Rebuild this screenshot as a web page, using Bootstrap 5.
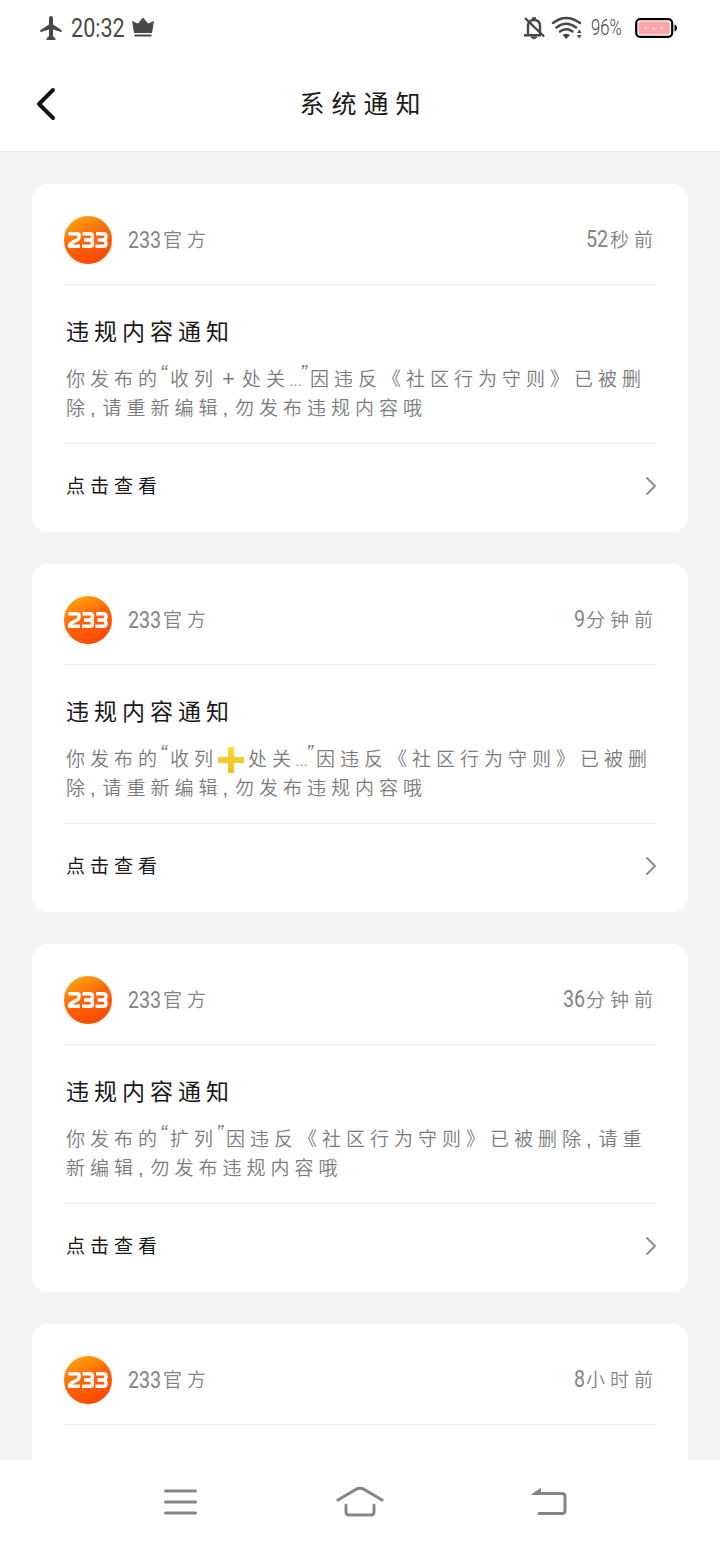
<!DOCTYPE html>
<html lang="zh-CN">
<head>
<meta charset="utf-8">
<meta name="viewport" content="width=device-width, initial-scale=1">
<title>系统通知</title>
<link rel="stylesheet" href="https://cdn.jsdelivr.net/npm/bootstrap@5.3.0/dist/css/bootstrap.min.css">
<style>
body{font-family:"Noto Sans CJK SC",sans-serif;font-weight:350;height:1544px;background:#f4f4f4;color:#191919;overflow:hidden}
.status{height:56px;color:#484848;padding:0 42px 0 39px}
.dg{display:inline-block;font-family:Roboto,sans-serif;font-weight:400;letter-spacing:0;transform-origin:0 50%;white-space:nowrap;line-height:1}
.clock{font-size:26px;width:55px;transform:scaleX(.83)}
.pct{font-size:22.5px;width:32px;font-weight:300;transform:scaleX(.74);position:relative;top:-1px}
.topbar{height:96px;border-bottom:1px solid #e4e4e4;padding-left:36px}
.topbar h1{font-size:25px;letter-spacing:7px;font-weight:400;line-height:32px;left:299.5px;top:30px;white-space:nowrap}
.feed{padding:32px 32px 0;gap:32px;height:1308px;overflow:hidden}
.note{height:348px;border-radius:16px;padding:0 32px;flex:none}
.who{height:101px;border-bottom:1px solid #ebebeb;color:#848484;font-size:19px;padding-top:11px}
.cj{letter-spacing:5px;white-space:nowrap}
.who .dg{font-size:24px;transform:scaleX(.82)}
.n233{width:35px}
.when{margin-right:-2px}
.msg{height:159px;border-bottom:1px solid #ebebeb;padding:28px 0 0 2px}
.msg h2{font-size:23px;letter-spacing:5px;font-weight:400;line-height:34px;margin:0 0 15.5px}
.msg p{font-size:19px;letter-spacing:5px;line-height:29.5px;color:#7c7c7c;white-space:nowrap;margin:0}
.pq,.pe,.pc,.pp{display:inline-block;letter-spacing:0;line-height:1;font-family:"Liberation Sans",sans-serif}
.pq{width:8px;font-size:21px;font-style:italic;text-indent:-2px;height:15px;line-height:15px;vertical-align:7px}
.pe{width:12px;font-size:13px;text-indent:-1px}
.pc{width:12.5px;font-size:20px}
.pp{width:24px;text-align:center;font-size:22px;text-indent:-3px}
.plus{width:28px;height:28px;margin:-4px 3px -4px -1px;vertical-align:-4px}
.more{height:88px;font-size:19px;padding-left:2px;font-weight:400}
.more span{margin-top:-6px}
.more svg{margin-top:-4px;margin-right:-1px}
.keys{height:84px;background:#fff;padding:0 152px 0 163px}
.home-key{margin:-2px 4px 0 -4px}
</style>
<script src="https://cdn.jsdelivr.net/npm/bootstrap@5.3.0/dist/js/bootstrap.bundle.min.js"></script>
</head>
<body>
<svg width="0" height="0" class="position-absolute">
<defs>
<linearGradient id="sun" x1=".15" y1="0" x2=".6" y2="1"><stop offset="0" stop-color="#ffad0d"/><stop offset=".5" stop-color="#ff6508"/><stop offset="1" stop-color="#ff4a05"/></linearGradient>
<linearGradient id="gold" x1="0" y1="0" x2="0" y2="1"><stop offset="0" stop-color="#fbdc35"/><stop offset="1" stop-color="#f0bd1f"/></linearGradient>
<symbol id="avatar" viewBox="0 0 48 48"><circle cx="24" cy="24" r="24" fill="url(#sun)"/><g fill="none" stroke="#fff" stroke-width="3.5" stroke-linejoin="round"><path d="M4.5 17.8H13Q15 17.8 15 19.5V21.5Q15 23 13 24L7.5 27Q5.5 28.5 5.5 30.2H16"/><path d="M18.5 17.8H26Q28.5 17.8 28.5 20.6Q28.5 24 25.5 24H20M25.5 24Q28.5 24 28.5 27.4Q28.5 30.2 26 30.2H18"/><path d="M32 17.8H39.5Q42 17.8 42 20.6Q42 24 39 24H33.5M39 24Q42 24 42 27.4Q42 30.2 39.5 30.2H31.5"/></g></symbol>
<symbol id="next" viewBox="0 0 12 20"><path d="M2 2L10 10L2 18" fill="none" stroke="#909090" stroke-width="2.1" stroke-linecap="round" stroke-linejoin="round"/></symbol>
</defs></svg>

<header class="bg-white">
<div class="status d-flex align-items-center">
<svg width="24" height="26" viewBox="0 0 24 26"><path d="M12 1Q14 1 14 4V9.5L22.5 15Q23.5 17 22 17L14 14.5V21L16.5 23.5V25H7.5V23.5L10 21V14.5L2 17Q.5 17 1.5 15L10 9.5V4Q10 1 12 1Z" fill="#484848"/></svg>
<span class="dg clock ms-2">20:32</span>
<svg class="ms-1 mb-1" width="26" height="22" viewBox="0 0 24 22"><path d="M1 6L7 8.5L12 2.5L17 8.5L23 6L21 18H3ZM3.5 19.6H20.5V21.5H3.5Z" fill="#484848"/></svg>
<svg class="ms-auto" width="22" height="24" viewBox="0 0 22 24" fill="none" stroke="#464646" stroke-width="2.4"><path d="M5 18V10Q5 4 11 4Q17 4 17 10V19M1 19.3H18M2 2L21 20.5"/><path d="M8 21H14L11 23Z" fill="#464646" stroke-width="1"/><path d="M9 2.5H13"/></svg>
<svg style="margin-left:6px" width="32" height="24" viewBox="0 0 32 24" fill="none" stroke="#484848" stroke-width="2.4" stroke-linecap="round"><path d="M2 7Q15-3 29 7M5.5 11.5Q15 4 25 11.5M9 15.5Q15 11 21.5 15.5"/><path d="M11.5 19Q15 16.5 19 19L15.2 23Z" fill="#484848" stroke="none"/><path d="M26 17L28.3 13.5L30.6 17ZM26 19L28.3 22.5L30.6 19Z" fill="#484848" stroke="none"/></svg>
<span class="dg pct ms-2">96%</span>
<svg style="margin-left:12px" width="43" height="20" viewBox="0 0 43 20"><rect x="1.2" y="1.2" width="36" height="17.6" rx="4" fill="#fff" stroke="#000" stroke-width="2.2"/><rect x="3.5" y="3.5" width="31.4" height="13" rx="2.5" fill="#ffa5ac"/><path d="M39.5 6.5Q42 7 42 10Q42 13 39.5 13.5Z"/><g fill="#ffd7bd"><circle cx="11" cy="10" r="1.7"/><circle cx="19" cy="10.5" r="1.7"/><circle cx="27" cy="10" r="1.7"/></g></svg>
</div>
<div class="topbar position-relative d-flex align-items-center">
<svg width="20" height="34" viewBox="0 0 20 34"><path d="M17 3L3 17L17 31" fill="none" stroke="#151515" stroke-width="4" stroke-linecap="round" stroke-linejoin="round"/></svg>
<h1 class="position-absolute m-0">系统通知</h1>
</div>
</header>

<main class="feed d-flex flex-column">
<section class="note bg-white">
<div class="who d-flex align-items-center"><svg class="me-3" width="48" height="48"><use href="#avatar"/></svg><span class="dg n233">233</span><span class="cj">官方</span><span class="when cj ms-auto"><span class="dg" style="width:24px">52</span>秒前</span></div>
<div class="msg"><h2>违规内容通知</h2><p>你发布的<span class="pq">“</span>收列<span class="pp">+</span>处关<span class="pe">…</span><span class="pq">”</span>因违反《社区行为守则》已被删<br>除<span class="pc">,</span>请重新编辑<span class="pc">,</span>勿发布违规内容哦</p></div>
<div class="more d-flex align-items-center cj"><span>点击查看</span><svg class="ms-auto" width="12" height="20"><use href="#next"/></svg></div>
</section>
<section class="note bg-white">
<div class="who d-flex align-items-center"><svg class="me-3" width="48" height="48"><use href="#avatar"/></svg><span class="dg n233">233</span><span class="cj">官方</span><span class="when cj ms-auto"><span class="dg" style="width:12px">9</span>分钟前</span></div>
<div class="msg"><h2>违规内容通知</h2><p>你发布的<span class="pq">“</span>收列<svg class="plus" viewBox="0 0 28 28"><path d="M11 1H17V11H27V17H17V27H11V17H1V11H11Z" fill="url(#gold)"/></svg>处关<span class="pe">…</span><span class="pq">”</span>因违反《社区行为守则》已被删<br>除<span class="pc">,</span>请重新编辑<span class="pc">,</span>勿发布违规内容哦</p></div>
<div class="more d-flex align-items-center cj"><span>点击查看</span><svg class="ms-auto" width="12" height="20"><use href="#next"/></svg></div>
</section>
<section class="note bg-white">
<div class="who d-flex align-items-center"><svg class="me-3" width="48" height="48"><use href="#avatar"/></svg><span class="dg n233">233</span><span class="cj">官方</span><span class="when cj ms-auto"><span class="dg" style="width:23px">36</span>分钟前</span></div>
<div class="msg"><h2>违规内容通知</h2><p>你发布的<span class="pq">“</span>扩列<span class="pq">”</span>因违反《社区行为守则》已被删除<span class="pc">,</span>请重<br>新编辑<span class="pc">,</span>勿发布违规内容哦</p></div>
<div class="more d-flex align-items-center cj"><span>点击查看</span><svg class="ms-auto" width="12" height="20"><use href="#next"/></svg></div>
</section>
<section class="note bg-white">
<div class="who d-flex align-items-center"><svg class="me-3" width="48" height="48"><use href="#avatar"/></svg><span class="dg n233">233</span><span class="cj">官方</span><span class="when cj ms-auto"><span class="dg" style="width:12px">8</span>小时前</span></div>
</section>
</main>

<nav class="keys d-flex align-items-center justify-content-between">
<svg width="35" height="30" viewBox="0 0 35 30"><path d="M2.5 4H32.5M2.5 15H32.5M2.5 26H32.5" stroke="#858585" stroke-width="3" stroke-linecap="round"/></svg>
<svg class="home-key" width="48" height="34" viewBox="0 0 48 34" fill="none" stroke="#858585" stroke-width="3" stroke-linecap="round" stroke-linejoin="round"><path d="M2 16L20.5 5Q24 3.5 27.5 5L46 16M10 21V28Q10 31 13 31H35Q38 31 38 28V21"/></svg>
<svg width="38" height="32" viewBox="0 0 38 32"><path d="M4 8H31Q34 8 34 11V25Q34 28 31 28H8" fill="none" stroke="#858585" stroke-width="3" stroke-linecap="round" transform="translate(1 -.5)"/><path d="M1 9Q5 5 11 2V9H2Z" fill="#858585"/></svg>
</nav>
</body>
</html>
